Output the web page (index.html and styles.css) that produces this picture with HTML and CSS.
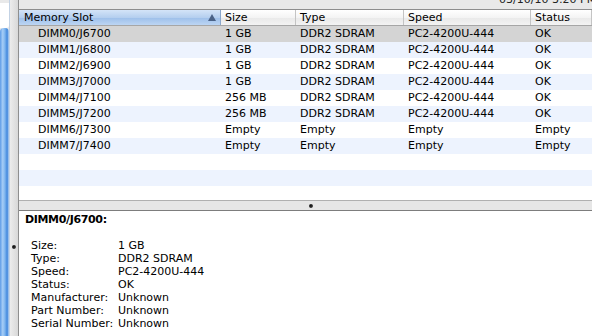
FILE: index.html
```html
<!DOCTYPE html>
<html lang="en">
<head>
    <meta charset="UTF-8">
    <title>Memory</title>
    <link rel="stylesheet" href="styles.css">
</head>
<body>
<div class="window">
    <div class="sidebar">
        <div class="scroller">
            <div class="track-top"></div>
            <div class="thumb"></div>
        </div>
        <div class="vsplit"><span class="dimple"></span></div>
    </div>

    <div class="main">
        <div class="toolbar"><span class="stamp">03/10/10 3:20 PM</span></div>

        <div class="table-pane">
            <div class="row head">
                <div class="cell sorted">Memory Slot <span class="arrow"></span></div>
                <div class="cell">Size</div>
                <div class="cell">Type</div>
                <div class="cell">Speed</div>
                <div class="cell">Status</div>
            </div>
            <div class="row selected">
                <div class="cell slot">DIMM0/J6700</div><div class="cell">1 GB</div><div class="cell">DDR2 SDRAM</div><div class="cell">PC2-4200U-444</div><div class="cell">OK</div>
            </div>
            <div class="row">
                <div class="cell slot">DIMM1/J6800</div><div class="cell">1 GB</div><div class="cell">DDR2 SDRAM</div><div class="cell">PC2-4200U-444</div><div class="cell">OK</div>
            </div>
            <div class="row">
                <div class="cell slot">DIMM2/J6900</div><div class="cell">1 GB</div><div class="cell">DDR2 SDRAM</div><div class="cell">PC2-4200U-444</div><div class="cell">OK</div>
            </div>
            <div class="row">
                <div class="cell slot">DIMM3/J7000</div><div class="cell">1 GB</div><div class="cell">DDR2 SDRAM</div><div class="cell">PC2-4200U-444</div><div class="cell">OK</div>
            </div>
            <div class="row">
                <div class="cell slot">DIMM4/J7100</div><div class="cell">256 MB</div><div class="cell">DDR2 SDRAM</div><div class="cell">PC2-4200U-444</div><div class="cell">OK</div>
            </div>
            <div class="row">
                <div class="cell slot">DIMM5/J7200</div><div class="cell">256 MB</div><div class="cell">DDR2 SDRAM</div><div class="cell">PC2-4200U-444</div><div class="cell">OK</div>
            </div>
            <div class="row">
                <div class="cell slot">DIMM6/J7300</div><div class="cell">Empty</div><div class="cell">Empty</div><div class="cell">Empty</div><div class="cell">Empty</div>
            </div>
            <div class="row">
                <div class="cell slot">DIMM7/J7400</div><div class="cell">Empty</div><div class="cell">Empty</div><div class="cell">Empty</div><div class="cell">Empty</div>
            </div>
            <div class="row"></div>
            <div class="row"></div>
            <div class="row"></div>
        </div>

        <div class="hsplit"><span class="dimple"></span></div>

        <div class="detail">
            <div class="detail-title">DIMM0/J6700:</div>
            <dl class="props">
                <dt>Size:</dt><dd>1 GB</dd>
                <dt>Type:</dt><dd>DDR2 SDRAM</dd>
                <dt>Speed:</dt><dd>PC2-4200U-444</dd>
                <dt>Status:</dt><dd>OK</dd>
                <dt>Manufacturer:</dt><dd>Unknown</dd>
                <dt>Part Number:</dt><dd>Unknown</dd>
                <dt>Serial Number:</dt><dd>Unknown</dd>
            </dl>
        </div>
    </div>
</div>
</body>
</html>
```

FILE: styles.css
```css
body {
    margin: 0;
    width: 592px;
    height: 336px;
    overflow: hidden;
    font-family: "DejaVu Sans", "Lucida Grande", sans-serif;
    font-size: 11px;
    color: #000;
    background: #e8e8e8;
}
.window {
    display: flex;
    height: 336px;
}

/* left source list edge */
.sidebar {
    display: flex;
    width: 19px;
    flex-shrink: 0;
}
.scroller {
    width: 9px;
    display: flex;
    flex-direction: column;
    border-right: 1px solid #c3d2e4;
    background: #e9e9e9;
}
.track-top {
    height: 25px;
    margin-top: 3px;
    background: #fff;
    border-radius: 0 0 3px 0;
}
.thumb {
    flex: 1;
    border-radius: 4px 4px 0 0;
    background: linear-gradient(to right, #5d9be6 0%, #a6cdf6 30%, #7db4ee 55%, #3f86dd 80%, #b9d4f1 100%);
}
.vsplit {
    width: 9px;
    padding-top: 245px;
    box-sizing: border-box;
    background: linear-gradient(to right, #ececec, #d8d8d8);
    border-right: 1px solid #8e8e8e;
}
.dimple {
    display: block;
    width: 4px;
    height: 4px;
    margin-left: 2px;
    border-radius: 50%;
    background: radial-gradient(circle at 40% 40%, #111 0%, #333 60%, #aaa 100%);
}

/* right side */
.main {
    flex: 1;
    display: flex;
    flex-direction: column;
    min-width: 0;
}
.toolbar {
    height: 9px;
    overflow: hidden;
    padding-left: 480px;
    background: #e9e9e9;
    white-space: nowrap;
}
.stamp {
    display: block;
    margin-top: -7px;
    line-height: 14px;
    color: #222;
}

.table-pane {
    height: 190px;
    overflow: hidden;
    border-top: 1px solid #8e8e8e;
    background: #fff;
}
.row {
    display: grid;
    grid-template-columns: 202px 75px 108px 127px 1fr;
    height: 16px;
    line-height: 16px;
    white-space: nowrap;
}
.row:nth-child(odd) {
    background: #edf3fe;
}
.row.selected {
    background: #d4d4d4;
}
.cell {
    padding-left: 4px;
    overflow: hidden;
}
.cell.slot {
    padding-left: 19px;
}
.row.head {
    height: 15px;
    line-height: 15px;
    border-bottom: 1px solid #a6a6a6;
    background: #fff;
}
.head .cell {
    border-right: 1px solid #c4c4c4;
    background: linear-gradient(#ffffff 0%, #f4f4f4 50%, #e9e9e9 51%, #f3f3f3 100%);
}
.head .cell.sorted {
    display: flex;
    justify-content: space-between;
    align-items: center;
    padding-left: 5px;
    padding-right: 4px;
    border-right-color: #8aa7cc;
    background: linear-gradient(#d4e4f8 0%, #b5cfef 50%, #9dbfea 51%, #bcd5f3 100%);
}
.arrow {
    width: 0;
    height: 0;
    border-left: 4px solid transparent;
    border-right: 4px solid transparent;
    border-bottom: 7px solid #4a6287;
}

.hsplit {
    height: 9px;
    border-top: 1px solid #b0b0b0;
    border-bottom: 1px solid #7d7d7d;
    background: #e6e6e6;
    display: flex;
    justify-content: center;
    align-items: center;
    padding-right: 290px;
    padding-left: 292px;
    box-sizing: content-box;
}
.hsplit .dimple {
    margin: 0;
    flex-shrink: 0;
}

.detail {
    flex: 1;
    background: #fff;
    padding: 2px 0 0 6px;
}
.detail-title {
    font-weight: bold;
    line-height: 14px;
    letter-spacing: -0.35px;
}
.props {
    display: grid;
    grid-template-columns: 87px 1fr;
    margin: 12px 0 0 6px;
    line-height: 13px;
}
.props dt,
.props dd {
    margin: 0;
    white-space: nowrap;
}
```
